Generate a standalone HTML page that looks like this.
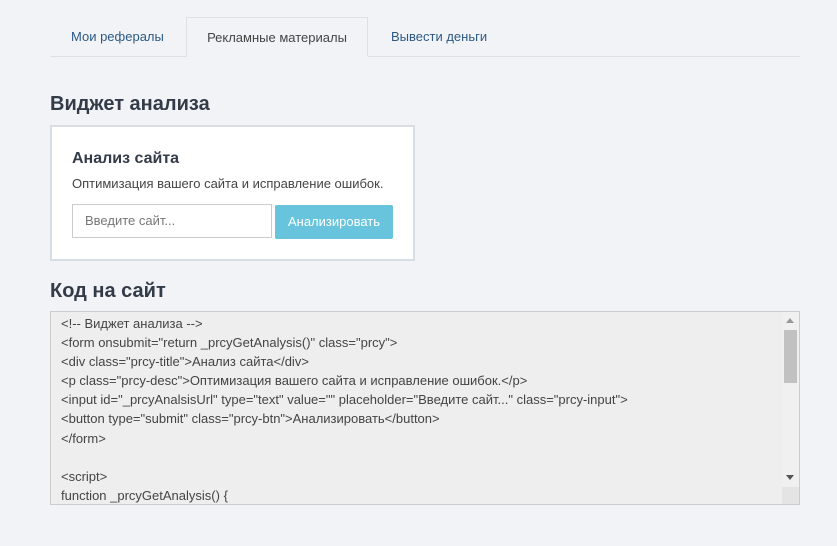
<!DOCTYPE html>
<html><head><meta charset="utf-8"><style>
*{box-sizing:border-box;margin:0;padding:0}
body{width:837px;height:546px;background:#f2f3f7;font-family:"Liberation Sans",Arial,sans-serif;position:relative;overflow:hidden;color:#333}
.tabline{position:absolute;left:50px;top:56px;width:750px;height:1px;background:#dde0e5}
.tab{position:absolute;top:18px;height:39px;font-size:13px;color:#2c5a84;line-height:38px}
.active{left:186px;top:17px;height:40px;width:182px;border:1px solid #dde0e5;border-bottom:1px solid #f2f3f7;text-align:center;color:#444;line-height:39px}
h2{position:absolute;left:50px;font-size:20px;font-weight:bold;color:#333b48}
.box{position:absolute;left:50px;top:125px;width:365px;height:136px;background:#fff;border:2px solid #d8dee4}
.t{position:absolute;left:20px;top:23px;font-size:16px;font-weight:bold;color:#333b48}
.d{position:absolute;left:20px;top:49px;font-size:13px;color:#444}
.in{position:absolute;left:20px;top:77px;width:200px;height:34px;border:1px solid #ccc;font-size:13px;color:#777;padding-left:12px;line-height:32px}
.btn{position:absolute;left:223px;top:78px;width:118px;height:34px;background:#67c4dc;color:#fff;font-size:13px;text-align:center;line-height:34px;border-radius:2px}
.ta{position:absolute;left:50px;top:311px;width:750px;height:194px;background:#eee;border:1px solid #ccc;overflow:hidden}
.code{position:absolute;left:10px;top:2px;font-size:13px;line-height:19.1px;color:#444;white-space:pre}
.sb{position:absolute;right:0;top:0;width:17px;height:192px;background:#f0f0f0}
.th{position:absolute;left:2px;top:18px;width:13px;height:53px;background:#c1c1c1}
</style></head><body>
<div class="tabline"></div>
<div class="tab" style="left:71px">Мои рефералы</div>
<div class="tab active">Рекламные материалы</div>
<div class="tab" style="left:391px">Вывести деньги</div>
<h2 style="top:93px">Виджет анализа</h2>
<div class="box">
<div class="t">Анализ сайта</div>
<div class="d">Оптимизация вашего сайта и исправление ошибок.</div>
<div class="in">Введите сайт...</div>
<div class="btn">Анализировать</div>
</div>
<h2 style="top:280px">Код на сайт</h2>
<div class="ta">
<div class="code">&lt;!-- Виджет анализа --&gt;
&lt;form onsubmit="return _prcyGetAnalysis()" class="prcy"&gt;
&lt;div class="prcy-title"&gt;Анализ сайта&lt;/div&gt;
&lt;p class="prcy-desc"&gt;Оптимизация вашего сайта и исправление ошибок.&lt;/p&gt;
&lt;input id="_prcyAnalsisUrl" type="text" value="" placeholder="Введите сайт..." class="prcy-input"&gt;
&lt;button type="submit" class="prcy-btn"&gt;Анализировать&lt;/button&gt;
&lt;/form&gt;

&lt;script&gt;
function _prcyGetAnalysis() {
    var url = window.document.getElementById('_prcyAnalsisUrl').value;</div>
<div class="sb"><div style="position:absolute;left:4px;top:6px;border:4px solid transparent;border-bottom:5px solid #999;border-top:0"></div><div class="th"></div><div style="position:absolute;left:4px;top:163px;border:4px solid transparent;border-top:5px solid #555;border-bottom:0"></div><div style="position:absolute;left:0;top:175px;width:17px;height:17px;background:#e4e4e4"></div></div>
</div>
</body></html>
